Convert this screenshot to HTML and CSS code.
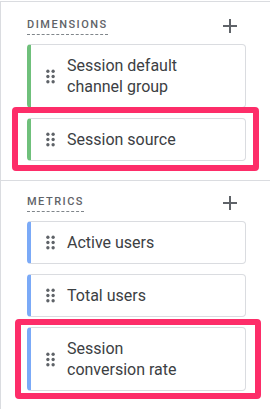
FILE: index.html
```html
<!DOCTYPE html>
<html lang="en">
<head>
    <meta charset="UTF-8">
    <meta name="viewport" content="width=device-width, initial-scale=1.0">
    <title>Variables</title>
    <link rel="stylesheet" href="styles.css">
</head>
<body>

<div class="panel">
    <div class="section section-dimensions">
        <div class="section-header">
            <span class="section-title">Dimensions</span>
            <svg class="add-icon" viewBox="0 0 24 24"><path d="M19 13h-6v6h-2v-6H5v-2h6V5h2v6h6v2z"/></svg>
        </div>
        <div class="chip-list">
            <div class="chip chip-dimension">
                <svg class="drag-icon" viewBox="0 0 24 24"><circle cx="9" cy="6" r="1.9"/><circle cx="15" cy="6" r="1.9"/><circle cx="9" cy="12" r="1.9"/><circle cx="15" cy="12" r="1.9"/><circle cx="9" cy="18" r="1.9"/><circle cx="15" cy="18" r="1.9"/></svg>
                <span class="chip-label">Session default<br>channel group</span>
            </div>
            <div class="chip chip-dimension">
                <svg class="drag-icon" viewBox="0 0 24 24"><circle cx="9" cy="6" r="1.9"/><circle cx="15" cy="6" r="1.9"/><circle cx="9" cy="12" r="1.9"/><circle cx="15" cy="12" r="1.9"/><circle cx="9" cy="18" r="1.9"/><circle cx="15" cy="18" r="1.9"/></svg>
                <span class="chip-label">Session source</span>
                <span class="highlight highlight-source"></span>
            </div>
        </div>
    </div>

    <div class="section section-metrics">
        <div class="section-header">
            <span class="section-title">Metrics</span>
            <svg class="add-icon" viewBox="0 0 24 24"><path d="M19 13h-6v6h-2v-6H5v-2h6V5h2v6h6v2z"/></svg>
        </div>
        <div class="chip-list">
            <div class="chip chip-metric">
                <svg class="drag-icon" viewBox="0 0 24 24"><circle cx="9" cy="6" r="1.9"/><circle cx="15" cy="6" r="1.9"/><circle cx="9" cy="12" r="1.9"/><circle cx="15" cy="12" r="1.9"/><circle cx="9" cy="18" r="1.9"/><circle cx="15" cy="18" r="1.9"/></svg>
                <span class="chip-label">Active users</span>
            </div>
            <div class="chip chip-metric">
                <svg class="drag-icon" viewBox="0 0 24 24"><circle cx="9" cy="6" r="1.9"/><circle cx="15" cy="6" r="1.9"/><circle cx="9" cy="12" r="1.9"/><circle cx="15" cy="12" r="1.9"/><circle cx="9" cy="18" r="1.9"/><circle cx="15" cy="18" r="1.9"/></svg>
                <span class="chip-label">Total users</span>
            </div>
            <div class="chip chip-metric">
                <svg class="drag-icon" viewBox="0 0 24 24"><circle cx="9" cy="6" r="1.9"/><circle cx="15" cy="6" r="1.9"/><circle cx="9" cy="12" r="1.9"/><circle cx="15" cy="12" r="1.9"/><circle cx="9" cy="18" r="1.9"/><circle cx="15" cy="18" r="1.9"/></svg>
                <span class="chip-label">Session<br>conversion rate</span>
                <span class="highlight highlight-rate"></span>
            </div>
        </div>
    </div>
</div>

</body>
</html>
```

FILE: styles.css
```css
body {
    margin: 0;
    padding: 0;
    background-color: #fff;
    font-family: Roboto, 'Noto Sans', sans-serif;
}

.panel {
    margin-top: 1px;
    border-top: 1px solid #dadce0;
    border-left: 1px solid #dadce0;
}

.section {
    padding: 12px 24px 19px 26px;
}

.section-metrics {
    padding-top: 10px;
    border-top: 1px solid #dadce0;
}

.section-header {
    display: flex;
    align-items: center;
    justify-content: space-between;
    height: 24px;
    margin-bottom: 6px;
}

.section-title {
    font-size: 11px;
    line-height: 16px;
    font-weight: 500;
    letter-spacing: 1.5px;
    text-transform: uppercase;
    color: #5f6368;
    padding-bottom: 1px;
    border-bottom: 1px dashed #80868b;
}

.add-icon {
    width: 24px;
    height: 24px;
    margin-right: 4px;
    fill: #5f6368;
}

.chip-list {
    display: flex;
    flex-direction: column;
    gap: 10px;
}

.chip {
    position: relative;
    display: flex;
    align-items: center;
    gap: 6px;
    padding: 10px 8px 10px 9px;
    border: 1px solid #dadce0;
    border-radius: 4px;
    background-color: #fff;
}

.chip-dimension {
    border-left: 4px solid #6fc07b;
}

.chip-metric {
    border-left: 4px solid #7baaf7;
}

.drag-icon {
    flex: none;
    width: 21px;
    height: 21px;
    fill: #5f6368;
}

.chip-label {
    font-size: 16px;
    line-height: 21px;
    color: #3c4043;
}

.highlight {
    position: absolute;
    border: 6px solid #fd2d69;
    border-radius: 4px;
    pointer-events: none;
}

.highlight-source {
    top: -12px;
    bottom: -11px;
    left: -19px;
    right: -14px;
}

.highlight-rate {
    top: -9px;
    bottom: -9px;
    left: -16px;
    right: -16px;
}
```
